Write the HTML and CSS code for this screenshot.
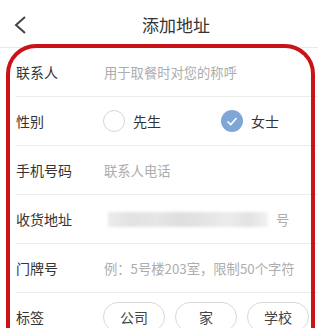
FILE: index.html
```html
<!DOCTYPE html>
<html lang="zh">
<head>
<meta charset="utf-8">
<link rel="stylesheet" href="styles.css">
</head>
<body>
<div class="page">
  <header class="header">
    <svg class="back" width="12" height="18" viewBox="0 0 12 18"><polyline points="11,1 2,9 11,17" fill="none" stroke="#444" stroke-width="2"/></svg>
    <h1 class="title">添加地址</h1>
  </header>
  <div class="form">
    <div class="row">
      <div class="label">联系人</div>
      <div class="ph">用于取餐时对您的称呼</div>
    </div>
    <div class="row">
      <div class="label">性别</div>
      <div class="opt">
        <span class="radio"></span><span class="opt-text">先生</span>
      </div>
      <div class="opt opt-2">
        <span class="radio checked"><svg width="22" height="22" viewBox="0 0 22 22"><polyline points="6.5,11.5 9.8,14.5 15.5,8" fill="none" stroke="#fff" stroke-width="1.6"/></svg></span><span class="opt-text">女士</span>
      </div>
    </div>
    <div class="row">
      <div class="label">手机号码</div>
      <div class="ph">联系人电话</div>
    </div>
    <div class="row">
      <div class="label">收货地址</div>
      <div class="blur"></div>
      <div class="ph">号</div>
    </div>
    <div class="row">
      <div class="label">门牌号</div>
      <div class="ph">例：5号楼203室，限制50个字符</div>
    </div>
    <div class="row">
      <div class="label">标签</div>
      <div class="tags">
        <span class="tag">公司</span>
        <span class="tag">家</span>
        <span class="tag">学校</span>
      </div>
    </div>
  </div>
  <div class="highlight"></div>
</div>
</body>
</html>
```
FILE: styles.css
```css
* { box-sizing: border-box; margin: 0; padding: 0; }
html, body { background: #fff; }
body {
  font-family: "Noto Sans CJK SC", "Noto Sans", sans-serif;
  color: #333;
  overflow: hidden;
}
.page { position: relative; width: 318px; height: 328px; overflow: hidden; }
.header {
  height: 48px;
  border-bottom: 1px solid #e9e9e9;
  display: flex;
  align-items: center;
  padding-top: 2px;
}
.back { margin-left: 14px; flex: none; }
.title {
  margin-left: 116px;
  font-size: 17px;
  font-weight: normal;
  color: #333;
}
.form { display: flex; flex-direction: column; }
.row {
  height: 49px;
  margin-left: 16px;
  border-bottom: 1px solid #ededed;
  display: flex;
  align-items: center;
}
.label { width: 88px; font-size: 14px; color: #333; flex: none; }
.ph { font-size: 13.3px; color: #adadad; white-space: nowrap; }
.opt { display: flex; align-items: center; }
.radio {
  width: 22px; height: 22px;
  border: 1px solid #d6d6d6;
  border-radius: 50%;
  display: inline-block;
  margin-left: -1px;
}
.radio.checked { border: none; background: #7ea7d6; }
.radio svg { display: block; }
.opt-text { font-size: 14px; margin-left: 8px; color: #333; }
.opt-2 { margin-left: 61px; }
.blur {
  width: 160px; height: 15px;
  margin-left: 4px; margin-right: 8px;
  background: linear-gradient(90deg, #ebebeb 0%, #e2e2e2 15%, #e6e6e6 30%, #dedede 45%, #e4e4e4 60%, #ececec 75%, #e2e2e2 88%, #f2f2f2 100%);
  filter: blur(1.5px);
}
.tags { display: flex; gap: 10px; margin-left: -1px; }
.tag {
  width: 62px; height: 30px;
  border: 1px solid #d8d8d8;
  border-radius: 15px;
  font-size: 14px;
  color: #444;
  display: flex; align-items: center; justify-content: center;
}
.highlight {
  position: absolute;
  left: 6px; top: 44px;
  width: 309px; height: 340px;
  border: 4px solid #cc1219;
  border-radius: 30px;
  pointer-events: none;
}
```
